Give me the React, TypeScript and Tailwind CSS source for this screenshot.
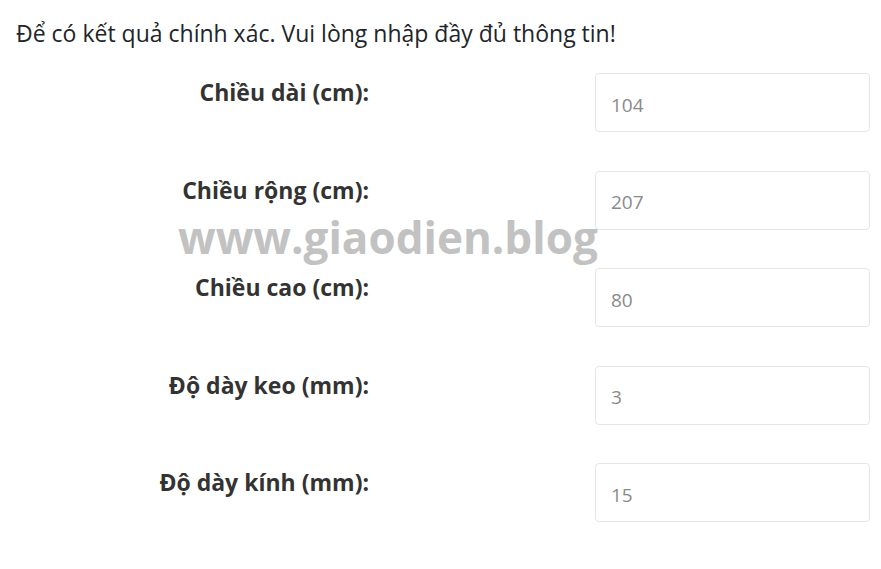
const rows = [
  { label: "Chiều dài (cm):", value: "104" },
  { label: "Chiều rộng (cm):", value: "207" },
  { label: "Chiều cao (cm):", value: "80" },
  { label: "Độ dày keo (mm):", value: "3" },
  { label: "Độ dày kính (mm):", value: "15" },
]

export default function App() {
  return (
    <div className="relative min-h-[569px] w-[881px] bg-white font-['Open_Sans',sans-serif] text-[#212529]">
      <p className="pl-4 pt-[16px] text-[23px] leading-[34px]">
        Để có kết quả chính xác. Vui lòng nhập đầy đủ thông tin!
      </p>
      <div className="mt-[23px] flex flex-col gap-[38.5px]">
        {rows.map((r) => (
          <div key={r.label} className="flex items-start">
            <label className="mt-[2px] w-[369px] text-right text-[23px] font-bold leading-[34px] text-[#333]">
              {r.label}
            </label>
            <input
              readOnly
              placeholder={r.value}
              className="ml-[226px] h-[59px] w-[275px] rounded-[4px] border border-[#e6e6e6] px-[15px] pt-[4px] text-[19px] text-[#8a8a8a] placeholder:text-[#8a8a8a] outline-none"
            />
          </div>
        ))}
      </div>
      <div className="pointer-events-none absolute left-[178px] top-[208px] text-[44px] font-bold leading-[58px] text-[#c2c2c2]">
        www.giaodien.blog
      </div>
    </div>
  )
}
